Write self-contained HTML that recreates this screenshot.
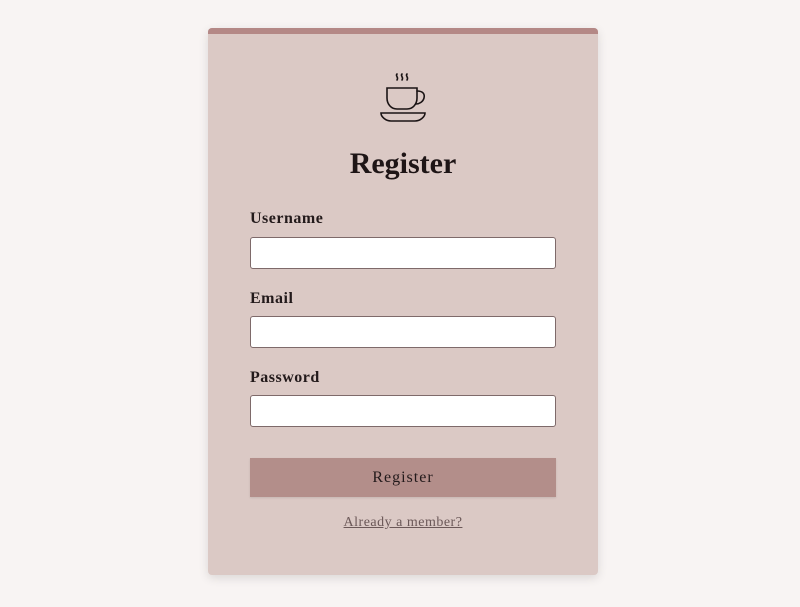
<!DOCTYPE html>
<html><head><meta charset="utf-8">
<style>
html,body{margin:0;padding:0;width:800px;height:607px;background:#f8f4f3;overflow:hidden;font-family:"Liberation Serif",serif;}
.card{position:absolute;left:208px;top:28px;width:390px;height:547px;background:#dbc9c5;border-radius:4px;box-shadow:0 3px 10px rgba(0,0,0,0.12);overflow:hidden;}
.top{position:absolute;left:0;top:0;width:390px;height:6px;background:#b48886;}
.icon{position:absolute;left:172px;top:44px;}
h1{position:absolute;left:0;top:119px;width:390px;margin:0;text-align:center;font-size:30px;font-weight:bold;color:#1e1516;}
label{position:absolute;left:42px;font-size:16px;font-weight:bold;letter-spacing:0.5px;color:#231a1b;}
.in{position:absolute;left:42px;width:304px;height:30px;background:#fff;border:1px solid #7e6a6a;border-radius:3px;}
.btn{position:absolute;left:42px;top:430px;width:306px;height:39px;background:#b38e8a;color:#231a1b;text-align:center;line-height:39px;font-size:16px;letter-spacing:1px;box-shadow:0 1px 2px rgba(0,0,0,0.1);}
.link{position:absolute;left:0;top:487px;width:390px;text-align:center;font-size:14px;color:#6b5858;text-decoration:underline;letter-spacing:0.5px;}
</style></head><body>
<div class="card">
<div class="top"></div>
<svg class="icon" width="50" height="52" viewBox="0 0 50 52" fill="none" stroke="#1a1314" stroke-width="1.6" stroke-linecap="round">
<path d="M17 2c-2 2 2 3 0 6M22 2c-2 2 2 3 0 6M27 2c-2 2 2 3 0 6"/>
<path d="M7 16h30v10c0 6-4 11-10 11h-10c-6 0-10-5-10-11z"/>
<path d="M37 19c6 0 8 3 7 7s-5 6-8 6"/>
<path d="M1 41h44c0 4-5 8-10 8h-24c-5 0-10-4-10-8z"/>
</svg>
<h1>Register</h1>
<label style="top:182px">Username</label>
<div class="in" style="top:209px"></div>
<label style="top:262px">Email</label>
<div class="in" style="top:288px"></div>
<label style="top:341px">Password</label>
<div class="in" style="top:367px"></div>
<div class="btn">Register</div>
<div class="link">Already a member?</div>
</div>
</body></html>
